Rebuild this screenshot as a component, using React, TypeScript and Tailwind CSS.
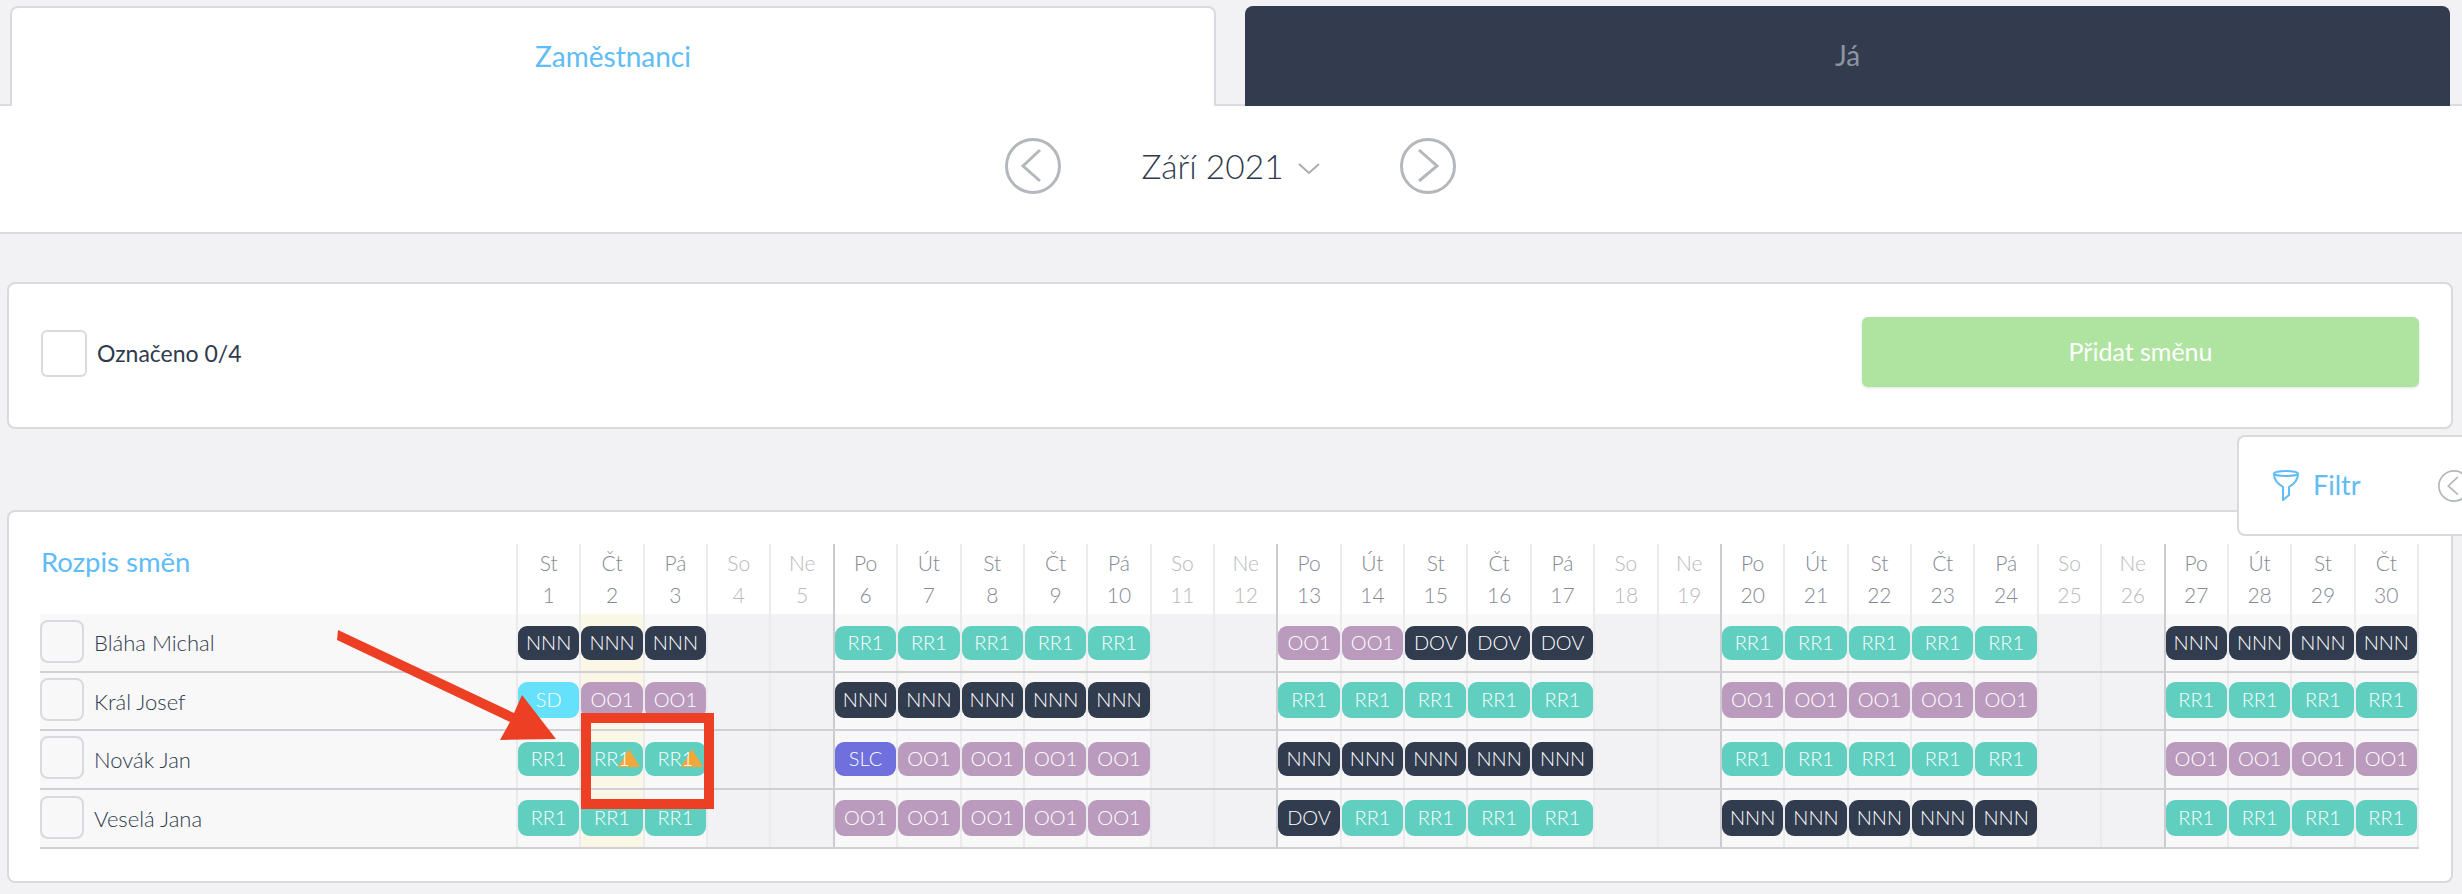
const DAY_NAMES = ["St", "Čt", "Pá", "So", "Ne", "Po", "Út"];

const DAYS = Array.from({ length: 30 }, (_, i) => ({
  num: i + 1,
  name: DAY_NAMES[i % 7],
  weekend: i % 7 === 3 || i % 7 === 4,
  monday: i % 7 === 5,
}));

const SHIFT_COLORS: Record<string, string> = {
  NNN: "bg-[#313c4f]",
  DOV: "bg-[#313c4f]",
  RR1: "bg-[#60cfc0]",
  OO1: "bg-[#ba9bbd]",
  SD: "bg-[#66e1fb]",
  SLC: "bg-[#6f6fdd]",
};

function week(code: string, from: number, to: number) {
  const out: Record<number, string> = {};
  for (let d = from; d <= to; d++) out[d] = code;
  return out;
}

const ROWS = [
  {
    name: "Bláha Michal",
    rowH: "h-[59px]",
    chip: "h-[34px] mt-[12px]",
    box: "mt-[6px]",
    shifts: { ...week("NNN", 1, 3), ...week("RR1", 6, 10), ...week("OO1", 13, 14), ...week("DOV", 15, 17), ...week("RR1", 20, 24), ...week("NNN", 27, 30) },
  },
  {
    name: "Král Josef",
    rowH: "h-[58px]",
    chip: "h-[36px] mt-[9px]",
    box: "mt-[5px]",
    shifts: { 1: "SD", ...week("OO1", 2, 3), ...week("NNN", 6, 10), ...week("RR1", 13, 17), ...week("OO1", 20, 24), ...week("RR1", 27, 30) },
  },
  {
    name: "Novák Jan",
    rowH: "h-[59px]",
    chip: "h-[34px] mt-[11px]",
    box: "mt-[5px]",
    shifts: { ...week("RR1", 1, 3), 6: "SLC", ...week("OO1", 7, 10), ...week("NNN", 13, 17), ...week("RR1", 20, 24), ...week("OO1", 27, 30) },
  },
  {
    name: "Veselá Jana",
    rowH: "h-[59px]",
    chip: "h-[36px] mt-[10px]",
    box: "mt-[6px]",
    shifts: { ...week("RR1", 1, 3), ...week("OO1", 6, 10), 13: "DOV", ...week("RR1", 14, 17), ...week("NNN", 20, 24), ...week("RR1", 27, 30) },
  },
] as { name: string; rowH: string; chip: string; box: string; shifts: Record<number, string> }[];

function dividerClass(monday: boolean) {
  return monday ? "border-l-2 border-[#cbcbd0]" : "border-l-2 border-[#ebebee]";
}

function CircleChevron({ dir, className }: { dir: "left" | "right"; className: string }) {
  return (
    <svg viewBox="0 0 56 56" className={className} fill="none" stroke="#b4b8bd">
      <circle cx="28" cy="28" r="26.5" strokeWidth="3" />
      <path d={dir === "left" ? "M35 12 L18 28 L35 43" : "M19 12 L37 28 L19 43"} strokeWidth="3" />
    </svg>
  );
}

function Chip({ code, warn, sizing }: { code: string; warn: boolean; sizing: string }) {
  return (
    <div className={`relative flex items-center justify-center rounded-[9px] pb-[2px] text-[20px] font-light text-white ${SHIFT_COLORS[code]} ${sizing}`}>
      {warn && (
        <svg viewBox="0 0 22 18" className="absolute right-[3px] top-[7px] h-[18px] w-[22px]">
          <path d="M11 0 L22 18 L0 18 Z" fill="#f3a63a" />
        </svg>
      )}
      <span className="relative">{code}</span>
    </div>
  );
}

export default function App() {
  return (
    <div className="relative h-[894px] w-[2462px] overflow-hidden bg-[#f2f2f4] font-['Lato',sans-serif] text-[#2f3a4c]">
      {/* Tabs */}
      <div className="flex h-[106px] items-end gap-[29px] border-b-2 border-[#dcdce0] pl-[10px] pr-[12px] pt-[6px]">
        <div className="-mb-[2px] flex h-[100px] w-[1206px] items-center justify-center rounded-t-[8px] border-2 border-b-0 border-[#d9d9de] bg-white pb-[2px] text-[28px] text-[#60bcf6]">
          Zaměstnanci
        </div>
        <div className="-mb-[2px] flex h-[100px] flex-1 items-center justify-center rounded-t-[8px] bg-[#323c4e] pb-[2px] text-[28px] text-[#8e95a0]">
          Já
        </div>
      </div>

      {/* Month switcher */}
      <div className="flex h-[128px] items-center justify-center gap-[80px] border-b-2 border-[#d9d9de] bg-white pb-[6px] pr-[1px]">
        <CircleChevron dir="left" className="h-[56px] w-[56px]" />
        <div className="flex items-center gap-[14px]">
          <span className="text-[33.5px] font-light">Září 2021</span>
          <svg viewBox="0 0 22 12" className="mt-[6px] h-[12px] w-[22px]" fill="none" stroke="#a9adb3" strokeWidth="2">
            <path d="M1 1 L11 10 L21 1" />
          </svg>
        </div>
        <CircleChevron dir="right" className="h-[56px] w-[56px]" />
      </div>

      {/* Toolbar card */}
      <div className="mx-[7px] mt-[48px] flex h-[147px] w-[2446px] items-center justify-between rounded-[8px] border-2 border-[#d9d9de] bg-white pl-[32px] pr-[32px]">
        <div className="-mt-[4px] flex items-center gap-[10px]">
          <div className="h-[47px] w-[46px] rounded-[6px] border-2 border-[#d9d9de] bg-white" />
          <span className="text-[23px]">Označeno 0/4</span>
        </div>
        <button className="-mt-[8px] flex h-[70px] w-[557px] items-center justify-center rounded-[6px] bg-[#afe4a0] text-[25px] text-white shadow-[0_1px_3px_rgba(0,0,0,0.12)]">
          Přidat směnu
        </button>
      </div>

      {/* Schedule card */}
      <div className="mx-[7px] mt-[81px] h-[373px] w-[2446px] rounded-[8px] border-2 border-[#d9d9de] bg-white pl-[31px] pt-[32px]">
        <div className="flex h-[70px] w-[2379px]">
          <div className="w-[476px] pl-[1px] text-[27.5px] leading-[36px] text-[#60bcf6]">Rozpis směn</div>
          <div className="grid w-[1903px] grid-cols-[repeat(30,minmax(0,1fr))] border-r-2 border-[#ebebee]">
            {DAYS.map((d) => (
              <div
                key={d.num}
                className={`flex flex-col items-center pt-[3px] text-[21px] font-light leading-[32px] ${dividerClass(d.monday)} ${d.weekend ? "text-[#b7b9bd]" : "text-[#858a93]"}`}
              >
                <span>{d.name}</span>
                <span>{d.num}</span>
              </div>
            ))}
          </div>
        </div>

        {ROWS.map((row) => (
          <div key={row.name} className={`flex w-[2379px] border-b-2 border-[#cfcfd4] bg-[#f8f8f9] ${row.rowH}`}>
            <div className="flex w-[476px] items-start">
              <div className={`h-[43px] w-[44px] rounded-[8px] border-2 border-[#d9d9de] ${row.box}`} />
              <span className="ml-[10px] self-center text-[22px] font-light">{row.name}</span>
            </div>
            <div className="grid w-[1903px] grid-cols-[repeat(30,minmax(0,1fr))] border-r-2 border-[#ebebee]">
              {DAYS.map((d) => {
                const code = row.shifts[d.num];
                const warn = row.name === "Novák Jan" && (d.num === 2 || d.num === 3);
                return (
                  <div
                    key={d.num}
                    className={`${dividerClass(d.monday)} ${d.num === 2 ? "bg-[#fbf7e6]" : d.weekend ? "bg-[#f2f2f4]" : ""}`}
                  >
                    {code && <Chip code={code} warn={warn} sizing={row.chip} />}
                  </div>
                );
              })}
            </div>
          </div>
        ))}
      </div>

      {/* Filter panel */}
      <div className="absolute left-[2237px] top-[435px] flex h-[101px] w-[240px] items-center rounded-l-[8px] border-2 border-r-0 border-[#d9d9de] bg-white pl-[34px]">
        <svg viewBox="0 0 26 31" className="h-[31px] w-[26px]" fill="none" stroke="#60bcf6" strokeWidth="2">
          <ellipse cx="13" cy="3.5" rx="12" ry="2.5" />
          <path d="M1 4 C1 10 5 14 10 17 L10 30 L16 25 L16 17 C21 14 25 10 25 4" />
        </svg>
        <span className="ml-[14px] text-[27px] text-[#60bcf6]">Filtr</span>
        <CircleChevron dir="left" className="ml-[77px] h-[32px] w-[32px] shrink-0" />
      </div>

      {/* Annotation over the schedule */}
      <svg viewBox="0 0 2462 894" className="pointer-events-none absolute inset-0 h-[894px] w-[2462px]">
        <polygon points="338,630 337,640 510,722 500,740 556,739 522,695 514,713" fill="#ec3f24" />
      </svg>
      <div className="pointer-events-none absolute left-[581px] top-[713px] h-[96px] w-[133px] border-[10px] border-[#ec3f24]" />
    </div>
  );
}
